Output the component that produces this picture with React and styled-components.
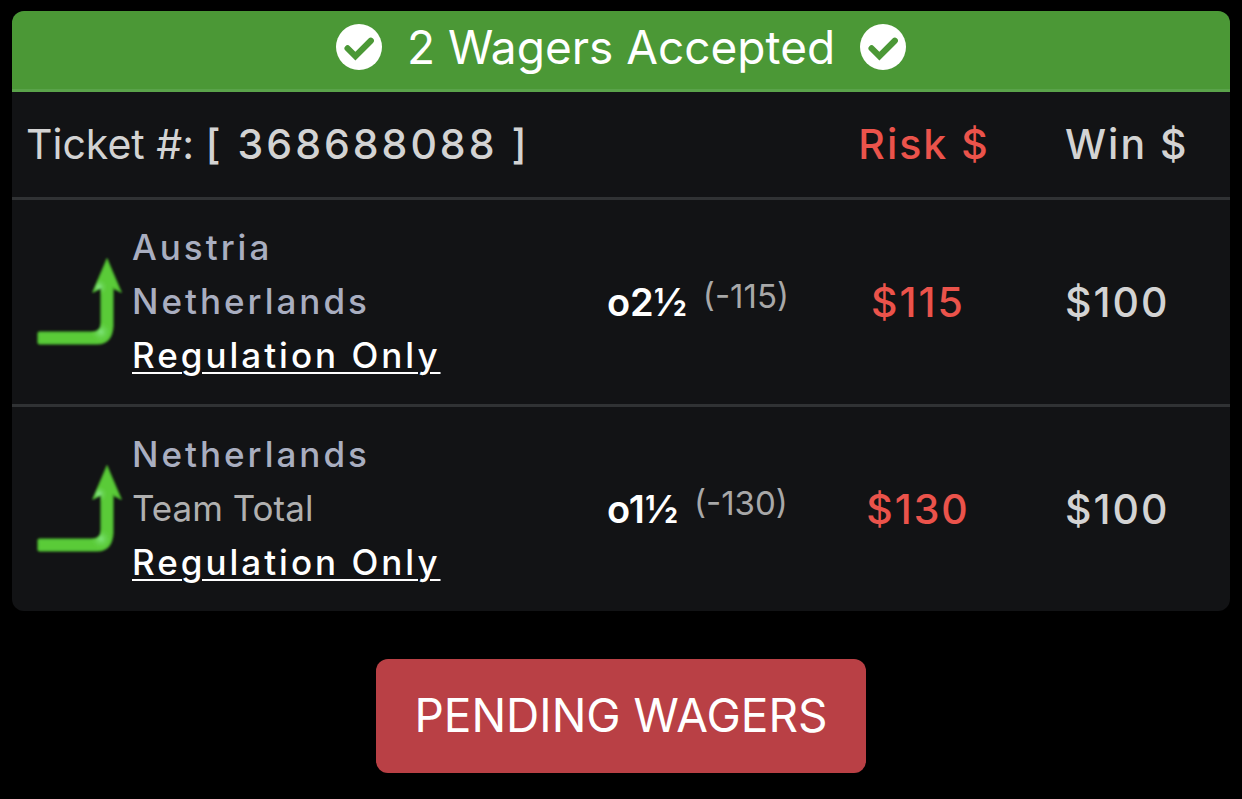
import React from "react"
import styled, { createGlobalStyle } from "styled-components"

const GREEN = "#4b9836"
const RED = "#eb534b"

const GlobalStyle = createGlobalStyle`
  * {
    box-sizing: border-box;
  }
  body {
    margin: 0;
    background-color: #000;
    color: #d3d3d3;
    font-family: Inter, Roboto, sans-serif;
  }
`

const Page = styled.main`
  display: flex;
  flex-direction: column;
  align-items: center;
  gap: 48px;
  padding: 11px 12px 26px;
`

const Card = styled.section`
  width: 100%;
  overflow: hidden;
  border-radius: 12px;
  background-color: #121315;
`

const Banner = styled.header`
  display: flex;
  justify-content: center;
  align-items: center;
  gap: 25px;
  height: 81px;
  padding-bottom: 6px;
  border-bottom: 3px solid #5aa34a;
  background-color: ${GREEN};
  color: #fff;
`

const BannerTitle = styled.h1`
  margin: 0;
  font-size: 46px;
  font-weight: 400;
  line-height: 56px;
`

const CheckSvg = styled.svg`
  flex: none;
  width: 46px;
  height: 46px;
`

const WagerTable = styled.table`
  width: 100%;
  table-layout: fixed;
  border-spacing: 0;
`

const Col = styled.col`
  width: ${({ $width }) => $width};
`

const HeadCell = styled.th`
  height: 108px;
  padding: ${({ $pad }) => $pad || "0 0 2px"};
  border-bottom: 3px solid #303234;
  color: ${({ $color }) => $color || "#d3d3d3"};
  font-size: 41px;
  font-weight: 500;
  letter-spacing: 2px;
  text-align: ${({ $align }) => $align || "left"};
  white-space: nowrap;
`

const TicketLabel = styled.span`
  font-weight: 400;
`

const TicketNumber = styled.span`
  letter-spacing: 3px;
`

const TicketCell = styled(HeadCell)`
  letter-spacing: 0;
`

const Cell = styled.td`
  height: 207px;
  padding: ${({ $pad }) => $pad || "0"};
  border-bottom: 3px solid #303234;
  text-align: ${({ $align }) => $align || "left"};
  white-space: nowrap;

  tr:last-child > & {
    height: 204px;
    border-bottom: none;
  }
`

const Pick = styled.div`
  display: flex;
  align-items: center;
  gap: 8px;
`

const Lines = styled.div`
  display: flex;
  flex-direction: column;
  align-items: flex-start;
  padding-bottom: 2px;
  font-size: 35px;
  line-height: 54px;
`

const Team = styled.span`
  color: #a9aec0;
  font-weight: 500;
  letter-spacing: 3px;
`

const Market = styled.span`
  color: #b0b0b0;
`

const Period = styled.span`
  color: #fff;
  font-weight: 500;
  letter-spacing: 3px;
  text-decoration: underline;
  text-decoration-thickness: 2px;
  text-underline-offset: 4px;
`

const Line = styled.div`
  display: flex;
  align-items: center;
  gap: 16px;
`

const Points = styled.span`
  color: #fff;
  font-size: 38px;
  font-weight: 600;
`

const Odds = styled.span`
  padding-bottom: 12px;
  color: #a8a8a8;
  font-size: 33px;
`

const Amount = styled.span`
  color: ${({ $color }) => $color || "#d3d3d3"};
  font-size: 41px;
  font-weight: 500;
  letter-spacing: 2px;
`

const PendingButton = styled.button`
  padding: 28px 38px 30px;
  border: none;
  border-radius: 12px;
  background-color: #b94045;
  color: #fff;
  font-family: inherit;
  font-size: 46px;
  line-height: 56px;
  cursor: pointer;
`

const Arrow = styled.svg`
  flex: none;
  width: 88px;
  height: 90px;
  overflow: visible;
`

const wagers = [
  {
    teams: ["Austria", "Netherlands"],
    period: "Regulation Only",
    points: "o2½",
    odds: "(-115)",
    risk: "$115",
    win: "$100"
  },
  {
    teams: ["Netherlands"],
    market: "Team Total",
    period: "Regulation Only",
    points: "o1½",
    odds: "(-130)",
    risk: "$130",
    win: "$100"
  }
]

const CheckIcon = () => (
  <CheckSvg viewBox="0 0 46 46" aria-hidden="true">
    <circle cx="23" cy="23" r="23" fill="#fff" />
    <path
      d="M11.6 24.4 L19.4 32.1 L34.8 16.7"
      fill="none"
      stroke={GREEN}
      strokeWidth="6.2"
      strokeLinecap="round"
    />
  </CheckSvg>
)

const OverArrow = ({ id }) => (
  <Arrow viewBox="0 0 88 90" aria-hidden="true">
    <defs>
      <radialGradient id={`${id}-head`} gradientUnits="userSpaceOnUse" cx="63" cy="30" r="9">
        <stop offset="0" stopColor="#8ce88e" />
        <stop offset="1" stopColor="#5acb38" stopOpacity="0" />
      </radialGradient>
      <radialGradient id={`${id}-bend`} gradientUnits="userSpaceOnUse" cx="65" cy="75" r="11">
        <stop offset="0" stopColor="#80e57c" />
        <stop offset="1" stopColor="#5acb38" stopOpacity="0" />
      </radialGradient>
      <filter id={`${id}-soft`} x="-10%" y="-10%" width="120%" height="120%">
        <feGaussianBlur stdDeviation="0.9" />
      </filter>
      <path
        id={`${id}-shape`}
        d="M71 2 L85 35 Q81 33 77 31 V69 Q76 87 61 87 H4 Q2 87 2 85 V77 Q2 75 4 75 H56 Q65 75 65 66 V31 Q61 33 57 35 Z"
      />
    </defs>
    <g filter={`url(#${id}-soft)`}>
      <use
        href={`#${id}-shape`}
        fill="#5acb38"
        stroke="#46a52c"
        strokeWidth="1.6"
        strokeLinejoin="round"
      />
      <use href={`#${id}-shape`} fill={`url(#${id}-head)`} />
      <use href={`#${id}-shape`} fill={`url(#${id}-bend)`} />
    </g>
  </Arrow>
)

const WagerRow = ({ wager, id }) => (
  <tr>
    <Cell $pad="0 0 0 24px">
      <Pick>
        <OverArrow id={id} />
        <Lines>
          {wager.teams.map((team) => (
            <Team key={team}>{team}</Team>
          ))}
          {wager.market && <Market>{wager.market}</Market>}
          <Period>{wager.period}</Period>
        </Lines>
      </Pick>
    </Cell>
    <Cell>
      <Line>
        <Points>{wager.points}</Points>
        <Odds>{wager.odds}</Odds>
      </Line>
    </Cell>
    <Cell $align="center">
      <Amount $color={RED}>{wager.risk}</Amount>
    </Cell>
    <Cell $pad="0 0 0 51px">
      <Amount>{wager.win}</Amount>
    </Cell>
  </tr>
)

const App = () => {
  return (
    <>
      <GlobalStyle />
      <Page>
        <Card>
          <Banner>
            <CheckIcon />
            <BannerTitle>{wagers.length} Wagers Accepted</BannerTitle>
            <CheckIcon />
          </Banner>
          <WagerTable>
            <colgroup>
              <Col />
              <Col $width="215px" />
              <Col $width="192px" />
              <Col $width="216px" />
            </colgroup>
            <thead>
              <tr>
                <TicketCell colSpan={2} $pad="0 0 2px 14px">
                  <TicketLabel>Ticket #: </TicketLabel>
                  <TicketNumber>[ 368688088 ]</TicketNumber>
                </TicketCell>
                <HeadCell $align="center" $pad="0 0 2px 12px" $color={RED}>
                  Risk $
                </HeadCell>
                <HeadCell $pad="0 0 2px 51px">Win $</HeadCell>
              </tr>
            </thead>
            <tbody>
              {wagers.map((wager, index) => (
                <WagerRow key={index} id={`wager-${index}`} wager={wager} />
              ))}
            </tbody>
          </WagerTable>
        </Card>
        <PendingButton type="button">PENDING WAGERS</PendingButton>
      </Page>
    </>
  )
}

export default App
